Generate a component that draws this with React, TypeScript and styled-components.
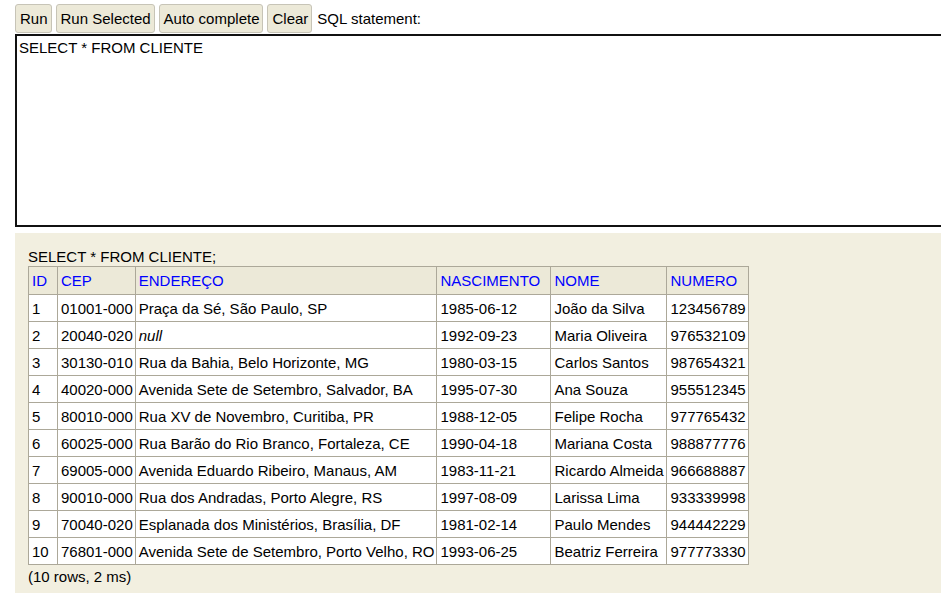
import React from 'react';
import styled, { createGlobalStyle } from 'styled-components';

const GlobalStyle = createGlobalStyle`
  html, body {
    margin: 0;
    padding: 0;
    background: #ffffff;
    overflow: hidden;
  }
  body {
    font-family: "Liberation Sans", Arial, sans-serif;
    font-size: 15px;
    color: #000;
  }
`;

type Row = {
  id: number;
  cep: string;
  endereco: string | null;
  nascimento: string;
  nome: string;
  numero: string;
};

const rows: Row[] = [
  { id: 1, cep: '01001-000', endereco: 'Praça da Sé, São Paulo, SP', nascimento: '1985-06-12', nome: 'João da Silva', numero: '123456789' },
  { id: 2, cep: '20040-020', endereco: null, nascimento: '1992-09-23', nome: 'Maria Oliveira', numero: '976532109' },
  { id: 3, cep: '30130-010', endereco: 'Rua da Bahia, Belo Horizonte, MG', nascimento: '1980-03-15', nome: 'Carlos Santos', numero: '987654321' },
  { id: 4, cep: '40020-000', endereco: 'Avenida Sete de Setembro, Salvador, BA', nascimento: '1995-07-30', nome: 'Ana Souza', numero: '955512345' },
  { id: 5, cep: '80010-000', endereco: 'Rua XV de Novembro, Curitiba, PR', nascimento: '1988-12-05', nome: 'Felipe Rocha', numero: '977765432' },
  { id: 6, cep: '60025-000', endereco: 'Rua Barão do Rio Branco, Fortaleza, CE', nascimento: '1990-04-18', nome: 'Mariana Costa', numero: '988877776' },
  { id: 7, cep: '69005-000', endereco: 'Avenida Eduardo Ribeiro, Manaus, AM', nascimento: '1983-11-21', nome: 'Ricardo Almeida', numero: '966688887' },
  { id: 8, cep: '90010-000', endereco: 'Rua dos Andradas, Porto Alegre, RS', nascimento: '1997-08-09', nome: 'Larissa Lima', numero: '933339998' },
  { id: 9, cep: '70040-020', endereco: 'Esplanada dos Ministérios, Brasília, DF', nascimento: '1981-02-14', nome: 'Paulo Mendes', numero: '944442229' },
  { id: 10, cep: '76801-000', endereco: 'Avenida Sete de Setembro, Porto Velho, RO', nascimento: '1993-06-25', nome: 'Beatriz Ferreira', numero: '977773330' },
];

// minimum content widths (px) chosen to line up with the reference grid
const columns = [
  { label: 'ID', width: 23 },
  { label: 'CEP', width: 70 },
  { label: 'ENDEREÇO', width: 290 },
  { label: 'NASCIMENTO', width: 108 },
  { label: 'NOME', width: 110 },
  { label: 'NUMERO', width: 70 },
];

const Page = styled.div`
  padding: 4px 0 0 15px;
  width: 100vw;
  height: 100vh;
  box-sizing: border-box;
  overflow: hidden;
`;

const Toolbar = styled.div`
  display: flex;
  align-items: center;
  gap: 4px;
  height: 29px;
`;

const ToolButton = styled.button`
  font: inherit;
  height: 29px;
  padding: 0 3px 0 4px;
  background: #ece9d8;
  border: 1px solid #c7c4b7;
  border-radius: 3px;
  color: #000;
  cursor: pointer;
`;

const Label = styled.span`
  margin-left: 1px;
`;

const Editor = styled.textarea`
  display: block;
  width: calc(100% + 40px);
  height: 193px;
  margin: 1px 0 0 0;
  padding: 3px 2px;
  box-sizing: border-box;
  border: 2px solid #111;
  font: inherit;
  resize: none;
  outline: none;
`;

const ResultPanel = styled.div`
  margin-top: 6px;
  margin-right: -40px;
  background: #f2efe0;
  padding: 15px 13px 12px;
  height: 400px;
`;

const Statement = styled.div`
  line-height: 17px;
  margin-bottom: 1px;
`;

const Grid = styled.table`
  border-collapse: collapse;
  background: #fff;
  border: 1px solid #aca899;
`;

const HeadCell = styled.th<{ $w: number }>`
  min-width: ${p => p.$w}px;
  height: 27px;
  padding: 0 2px 0 3px;
  text-align: left;
  font-weight: normal;
  color: #0000ff;
  background: #ece9d8;
  border: 1px solid #aca899;
  white-space: nowrap;
`;

const Cell = styled.td<{ $null?: boolean }>`
  height: 26px;
  padding: 0 2px 0 3px;
  border: 1px solid #aca899;
  white-space: nowrap;
  font-style: ${p => (p.$null ? 'italic' : 'normal')};
`;

const Footer = styled.div`
  margin-top: 3px;
`;

export default function App() {
  return (
    <Page>
      <GlobalStyle />
      <Toolbar>
        <ToolButton>Run</ToolButton>
        <ToolButton>Run Selected</ToolButton>
        <ToolButton>Auto complete</ToolButton>
        <ToolButton>Clear</ToolButton>
        <Label>SQL statement:</Label>
      </Toolbar>
      <Editor defaultValue="SELECT * FROM CLIENTE" spellCheck={false} />
      <ResultPanel>
        <Statement>SELECT * FROM CLIENTE;</Statement>
        <Grid>
          <thead>
            <tr>
              {columns.map(c => (
                <HeadCell key={c.label} $w={c.width}>{c.label}</HeadCell>
              ))}
            </tr>
          </thead>
          <tbody>
            {rows.map(r => (
              <tr key={r.id}>
                <Cell>{r.id}</Cell>
                <Cell>{r.cep}</Cell>
                <Cell $null={r.endereco === null}>{r.endereco ?? 'null'}</Cell>
                <Cell>{r.nascimento}</Cell>
                <Cell>{r.nome}</Cell>
                <Cell>{r.numero}</Cell>
              </tr>
            ))}
          </tbody>
        </Grid>
        <Footer>(10 rows, 2 ms)</Footer>
      </ResultPanel>
    </Page>
  );
}
